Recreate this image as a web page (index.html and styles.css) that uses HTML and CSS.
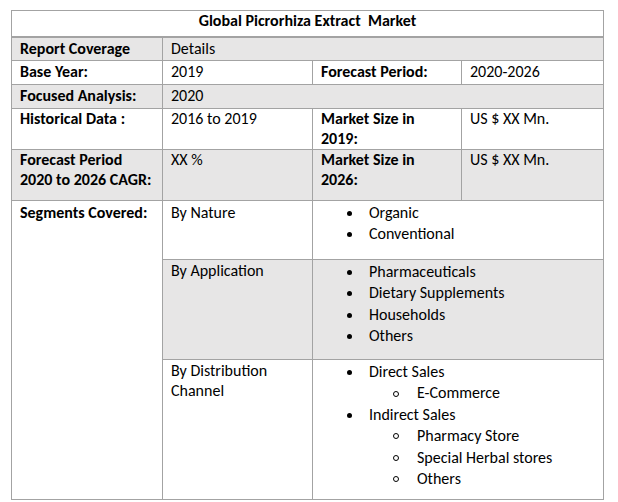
FILE: index.html
```html
<!DOCTYPE html>
<html>
<head>
<meta charset="utf-8">
<link rel="stylesheet" href="styles.css">
</head>
<body>
<table class="report">
  <colgroup>
    <col class="c1"><col class="c2"><col class="c3"><col class="c4">
  </colgroup>
  <tr class="r-title">
    <td colspan="4" class="title">Global Picrorhiza Extract&nbsp; Market</td>
  </tr>
  <tr class="r-short shade">
    <td class="label">Report Coverage</td>
    <td colspan="3">Details</td>
  </tr>
  <tr class="r-short">
    <td class="label">Base Year:</td>
    <td>2019</td>
    <td class="label">Forecast Period:</td>
    <td>2020-2026</td>
  </tr>
  <tr class="r-short shade">
    <td class="label">Focused Analysis:</td>
    <td colspan="3">2020</td>
  </tr>
  <tr class="r-hist">
    <td class="label">Historical Data :</td>
    <td>2016 to 2019</td>
    <td class="label">Market Size in<br>2019:</td>
    <td>US $ XX Mn.</td>
  </tr>
  <tr class="r-cagr shade">
    <td class="label">Forecast Period<br>2020 to 2026 CAGR:</td>
    <td>XX %</td>
    <td class="label">Market Size in<br>2026:</td>
    <td>US $ XX Mn.</td>
  </tr>
  <tr class="r-nature">
    <td class="label seg" rowspan="3">Segments Covered:</td>
    <td class="seg">By Nature</td>
    <td colspan="2" class="listcell">
      <ul class="bullets">
        <li>Organic</li>
        <li>Conventional</li>
      </ul>
    </td>
  </tr>
  <tr class="r-app shade">
    <td>By Application</td>
    <td colspan="2" class="listcell">
      <ul class="bullets">
        <li>Pharmaceuticals</li>
        <li>Dietary Supplements</li>
        <li>Households</li>
        <li>Others</li>
      </ul>
    </td>
  </tr>
  <tr class="r-dist">
    <td>By Distribution<br>Channel</td>
    <td colspan="2" class="listcell">
      <ul class="bullets">
        <li>Direct Sales</li>
        <li class="sub">E-Commerce</li>
        <li>Indirect Sales</li>
        <li class="sub">Pharmacy Store</li>
        <li class="sub">Special Herbal stores</li>
        <li class="sub">Others</li>
      </ul>
    </td>
  </tr>
</table>
</body>
</html>
```

FILE: styles.css
```css
html, body {
  margin: 0;
  padding: 0;
  background: #ffffff;
}

body {
  font-family: "Carlito", "Lato", "Liberation Sans", sans-serif;
  font-size: 16px;
  color: #000000;
}

.report {
  border-collapse: collapse;
  margin: 10px 0 0 11px;
  table-layout: fixed;
}

.c1 { width: 151px; }
.c2 { width: 150px; }
.c3 { width: 149px; }
.c4 { width: 142px; }

.report td {
  border: 1px solid #a3a3a3;
  padding: 1px 8px 0 8px;
  vertical-align: top;
  line-height: 20px;
}

.shade td {
  background: #e7e6e6;
}

.label {
  font-weight: bold;
}

.report .title {
  font-weight: bold;
  text-align: center;
  padding-top: 0;
  border-bottom: 2px solid #a3a3a3;
}

.r-title { height: 26px; }
.r-short { height: 24px; }
.r-hist { height: 40px; }
.r-cagr { height: 51px; }
.r-nature { height: 59px; }
.r-app { height: 100px; }
.r-dist { height: 140px; }

.r-hist td,
.r-cagr td {
  padding-top: 0;
}

.report .seg {
  padding-top: 2px;
}

.report .listcell {
  padding-top: 1px;
}

.bullets {
  list-style: none;
  margin: 0;
  padding: 0 0 0 26px;
}

.bullets li {
  display: flex;
  align-items: center;
  line-height: 21.4px;
}

.bullets li::before {
  content: "";
  width: 5px;
  height: 5px;
  border-radius: 50%;
  background: #000000;
  margin-right: 17px;
  margin-top: 1px;
}

.bullets li.sub {
  padding-left: 46px;
}

.bullets li.sub::before {
  width: 4px;
  height: 4px;
  background: transparent;
  border: 1px solid #000000;
  margin-right: 18px;
}
```
